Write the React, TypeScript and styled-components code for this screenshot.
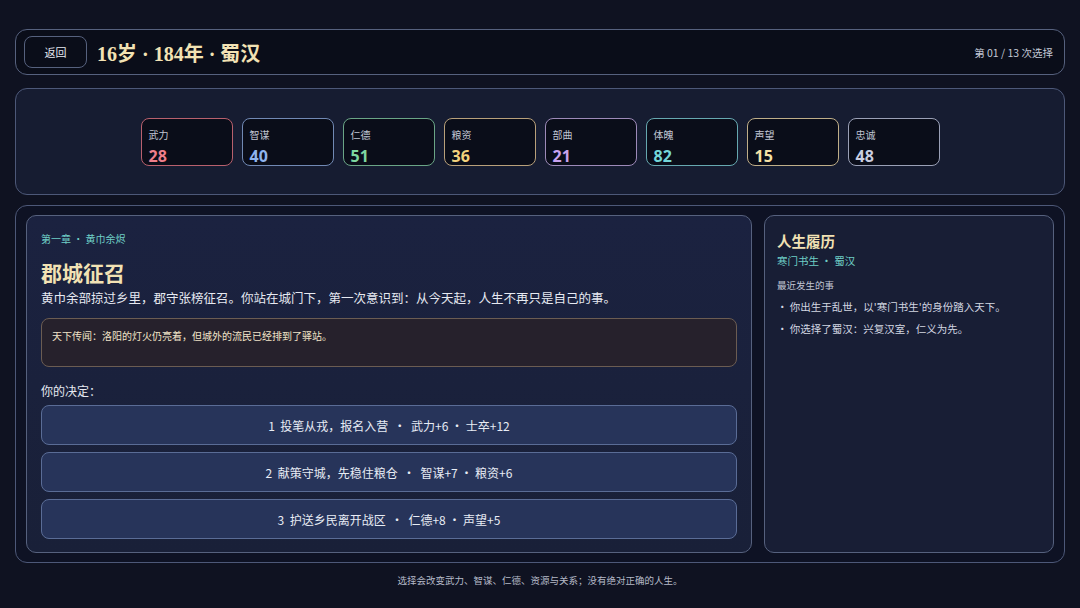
import styled, { createGlobalStyle } from 'styled-components';

const GlobalStyle = createGlobalStyle`
  html, body {
    margin: 0;
    padding: 0;
    background: #0f1221;
  }
  body {
    font-family: "Noto Sans CJK SC", "Noto Sans", sans-serif;
    color: #e3e7f0;
  }
`;

const Page = styled.div`
  width: 1080px;
  height: 608px;
  box-sizing: border-box;
  padding: 29px 15px 0;
  display: flex;
  flex-direction: column;
  background: #0f1221;
`;

const Header = styled.div`
  height: 46px;
  box-sizing: border-box;
  display: flex;
  align-items: center;
  padding: 0 11px 0 8px;
  border: 1px solid #56617e;
  border-radius: 12px;
  background: #0a0d19;
`;

const BackButton = styled.button`
  width: 63px;
  height: 32px;
  border: 1px solid #56617e;
  border-radius: 8px;
  background: #0a0d19;
  color: #e6e9f2;
  font-family: "Noto Sans CJK SC", sans-serif;
  font-size: 11px;
  padding: 0;
`;

const Title = styled.h1`
  margin: 0 0 0 10px;
  font-family: "Liberation Serif", "Noto Sans CJK SC", serif;
  font-size: 20px;
  font-weight: 700;
  color: #f2e2b4;
  flex: 1;
`;

const Progress = styled.span`
  font-size: 10.5px;
  color: #c3c8d6;
`;

const StatsPanel = styled.div`
  margin-top: 13px;
  height: 107px;
  box-sizing: border-box;
  border: 1px solid #4d5878;
  border-radius: 12px;
  background: #161c31;
  display: flex;
  justify-content: center;
  align-items: center;
  gap: 9px;
`;

const StatCard = styled.div<{ $border: string }>`
  width: 92px;
  height: 48px;
  box-sizing: border-box;
  border: 1px solid ${(p) => p.$border};
  border-radius: 8px;
  background: #0a0d19;
  padding: 9px 0 0 7px;
  display: flex;
  flex-direction: column;
`;

const StatLabel = styled.span`
  font-size: 10px;
  line-height: 14px;
  color: #c0c5d3;
`;

const StatValue = styled.span<{ $color: string }>`
  margin-top: 5px;
  font-family: "Noto Sans", sans-serif;
  font-size: 16px;
  line-height: 18px;
  font-weight: 700;
  color: ${(p) => p.$color};
`;

const Main = styled.div`
  margin-top: 10px;
  height: 358px;
  box-sizing: border-box;
  border: 1px solid #4d5878;
  border-radius: 12px;
  background: #0e1224;
  padding: 9px 10px;
  display: grid;
  grid-template-columns: 726px 1fr;
  gap: 12px;
`;

const StoryCard = styled.div`
  border: 1px solid #56617e;
  border-radius: 10px;
  background: linear-gradient(180deg, #1b2240 0%, #192038 100%);
  padding: 15px 14px 0 14px;
  display: flex;
  flex-direction: column;
`;

const Chapter = styled.div`
  font-size: 10px;
  line-height: 16px;
  color: #6fcfc6;
`;

const SceneTitle = styled.h2`
  margin: 14px 0 0;
  font-family: "Liberation Serif", "Noto Sans CJK SC", serif;
  font-size: 21px;
  line-height: 26px;
  font-weight: 700;
  color: #f2e2b4;
`;

const SceneText = styled.p`
  margin: 1px 0 0;
  font-size: 12.5px;
  line-height: 20px;
  color: #e6e9f1;
`;

const Rumor = styled.div`
  margin-top: 10px;
  height: 49px;
  box-sizing: border-box;
  border: 1px solid #6b5c52;
  border-radius: 8px;
  background: #26212c;
  padding: 9px 10px;
  font-size: 10px;
  line-height: 16px;
  color: #f1e4c8;
`;

const DecisionLabel = styled.div`
  margin-top: 16px;
  font-size: 12px;
  line-height: 16px;
  color: #e6e9f1;
`;

const Choices = styled.div`
  margin-top: 6px;
  display: flex;
  flex-direction: column;
  gap: 7px;
`;

const Choice = styled.button`
  height: 40px;
  border: 1px solid #5a6c96;
  border-radius: 8px;
  background: #27345a;
  color: #e8ecf5;
  font-family: "Noto Sans CJK SC", sans-serif;
  font-size: 12px;
  padding: 0;
  white-space: pre;
`;

const LifeCard = styled.div`
  border: 1px solid #56617e;
  border-radius: 10px;
  background: #181e35;
  padding: 14px 12px 0;
  display: flex;
  flex-direction: column;
`;

const LifeTitle = styled.h3`
  margin: 0;
  font-size: 14.5px;
  line-height: 22px;
  font-weight: 700;
  color: #f2e2b4;
`;

const Identity = styled.div`
  margin-top: 1px;
  font-size: 10.5px;
  line-height: 16px;
  color: #6fcfc6;
`;

const RecentLabel = styled.div`
  margin-top: 9px;
  font-size: 9.5px;
  line-height: 14px;
  color: #c0c5d3;
`;

const Events = styled.ul`
  margin: 7px 0 0;
  padding: 0;
  list-style: none;
  display: flex;
  flex-direction: column;
  gap: 6px;
`;

const Event = styled.li`
  font-size: 10.5px;
  line-height: 16px;
  color: #d3d7e2;
`;

const Footer = styled.div`
  margin-top: 10px;
  text-align: center;
  font-size: 9.5px;
  line-height: 14px;
  color: #b5bac8;
`;

const stats = [
  { label: '武力', value: 28, color: '#ef7f8b', border: '#b8606d' },
  { label: '智谋', value: 40, color: '#8fb4ee', border: '#7189b4' },
  { label: '仁德', value: 51, color: '#7ed7a0', border: '#6aa586' },
  { label: '粮资', value: 36, color: '#f4d27d', border: '#b8a07a' },
  { label: '部曲', value: 21, color: '#c8a2ee', border: '#9d8ab8' },
  { label: '体魄', value: 82, color: '#74d6d8', border: '#66a8b0' },
  { label: '声望', value: 15, color: '#f6e2a6', border: '#bfae88' },
  { label: '忠诚', value: 48, color: '#c9cde0', border: '#9aa0b6' },
];

const choices = [
  '1  投笔从戎，报名入营  ·  武力+6 · 士卒+12',
  '2  献策守城，先稳住粮仓  ·  智谋+7 · 粮资+6',
  '3  护送乡民离开战区  ·  仁德+8 · 声望+5',
];

function App() {
  return (
    <>
      <GlobalStyle />
      <Page>
        <Header>
          <BackButton>返回</BackButton>
          <Title>16岁 · 184年 · 蜀汉</Title>
          <Progress>第 01 / 13 次选择</Progress>
        </Header>
        <StatsPanel>
          {stats.map((s) => (
            <StatCard key={s.label} $border={s.border}>
              <StatLabel>{s.label}</StatLabel>
              <StatValue $color={s.color}>{s.value}</StatValue>
            </StatCard>
          ))}
        </StatsPanel>
        <Main>
          <StoryCard>
            <Chapter>第一章 · 黄巾余烬</Chapter>
            <SceneTitle>郡城征召</SceneTitle>
            <SceneText>
              黄巾余部掠过乡里，郡守张榜征召。你站在城门下，第一次意识到：从今天起，人生不再只是自己的事。
            </SceneText>
            <Rumor>天下传闻：洛阳的灯火仍亮着，但城外的流民已经排到了驿站。</Rumor>
            <DecisionLabel>你的决定：</DecisionLabel>
            <Choices>
              {choices.map((c) => (
                <Choice key={c}>{c}</Choice>
              ))}
            </Choices>
          </StoryCard>
          <LifeCard>
            <LifeTitle>人生履历</LifeTitle>
            <Identity>寒门书生 · 蜀汉</Identity>
            <RecentLabel>最近发生的事</RecentLabel>
            <Events>
              <Event>· 你出生于乱世，以'寒门书生'的身份踏入天下。</Event>
              <Event>· 你选择了蜀汉：兴复汉室，仁义为先。</Event>
            </Events>
          </LifeCard>
        </Main>
        <Footer>选择会改变武力、智谋、仁德、资源与关系；没有绝对正确的人生。</Footer>
      </Page>
    </>
  );
}

export default App;
